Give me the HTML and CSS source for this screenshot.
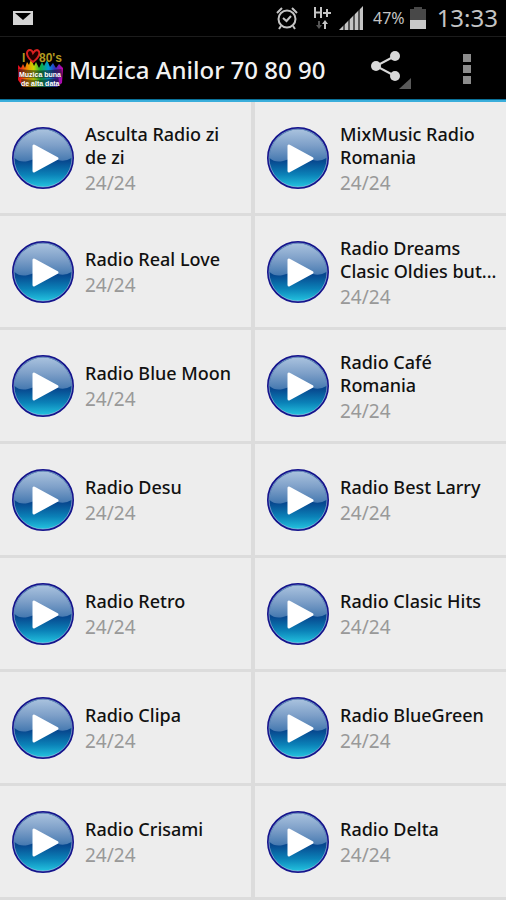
FILE: index.html
```html
<!DOCTYPE html>
<html lang="ro">
<head>
<meta charset="utf-8">
<meta name="viewport" content="width=device-width, initial-scale=1">
<title>Muzica Anilor 70 80 90</title>
<link rel="stylesheet" href="styles.css">
</head>
<body>
<svg class="defs" width="0" height="0" aria-hidden="true">
  <defs>
    <linearGradient id="lower" x1="0" y1="0" x2="0" y2="1">
      <stop offset="0" stop-color="#07458c"/>
      <stop offset=".55" stop-color="#07488f"/>
      <stop offset=".78" stop-color="#0b82b8"/>
      <stop offset="1" stop-color="#25c8e2"/>
    </linearGradient>
    <linearGradient id="gloss" x1="0" y1="0" x2="0" y2="1">
      <stop offset="0" stop-color="#a9c2de"/>
      <stop offset=".5" stop-color="#7d9fc8"/>
      <stop offset="1" stop-color="#4478b0"/>
    </linearGradient>
    <linearGradient id="rainbow">
      <stop offset="0" stop-color="#e00020"/>
      <stop offset=".2" stop-color="#f08a00"/>
      <stop offset=".35" stop-color="#c8d800"/>
      <stop offset=".5" stop-color="#10b040"/>
      <stop offset=".68" stop-color="#0098d8"/>
      <stop offset=".82" stop-color="#3030c0"/>
      <stop offset="1" stop-color="#d000a8"/>
    </linearGradient>
    <symbol id="play" viewBox="0 0 62 62">
      <circle cx="31" cy="31" r="30" fill="url(#lower)" stroke="#14148c" stroke-width="2"/>
      <path d="M2.5 31A28.5 28.5 0 0 1 59.5 31Q53 35 46 33Q31 28 16 34Q8 36 2.500 31Z" fill="url(#gloss)"/>
      <circle cx="31" cy="31" r="29" fill="none" stroke="#b9cfe6" stroke-opacity=".55" stroke-width="1"/>
      <path d="M22 19V44L45 31.500Z" fill="#fff" stroke="#fff" stroke-width="3" stroke-linejoin="round"/>
    </symbol>
  </defs>
</svg>
<header class="top">
  <div class="status">
    <svg class="mail" width="20" height="14" viewBox="0 0 20 14" aria-label="Mail"><path fill="#d4d4d4" d="M0 0H20V14H0Z"/><path fill="#000" d="M2 2H18L10 9Z"/></svg>
    <svg width="22" height="24" viewBox="0 0 22 24" fill="none" stroke="#c4c4c4" stroke-width="2" aria-label="Alarm"><circle cx="11" cy="13" r="8.500"/><path d="M7 12L10.500 15L15 10M1 7L6 2M16 2L21 7M5 20L3 23M17 20L19 23"/></svg>
    <svg class="network" width="18" height="24" viewBox="0 0 18 24" fill="none" aria-label="H+"><path d="M2 1V12M8 1V12M2 6.500H8M10 7H18M14 3V11" stroke="#c4c4c4" stroke-width="2"/><path d="M6 15V20" stroke="#555" stroke-width="2"/><path d="M3 19H9L6 23Z" fill="#555"/><path d="M12 17V23" stroke="#c4c4c4" stroke-width="2"/><path d="M9 18H15L12 14Z" fill="#c4c4c4"/></svg>
    <svg class="signal" width="24" height="24" viewBox="0 0 24 24" fill="#c4c4c4" aria-label="Signal"><path d="M0 24L4 20V24ZM6 18L9 15V24H6ZM11 13L14 10V24H11ZM16 8L19 5V24H16ZM21 3L24 0V24H21Z"/><path d="M4 20L6 18V24H4ZM9 15L11 13V24H9ZM14 10L16 8V24H14ZM19 5L21 3V24H19Z" fill="#555"/></svg>
    <span class="percent">47%</span>
    <svg class="battery" width="16" height="22" viewBox="0 0 16 22" aria-label="Battery"><path fill="#484848" d="M4 0H12V2H16V13H0V2H4Z"/><path fill="#c8c8c8" d="M0 13H16V22H0Z"/></svg>
    <time class="clock">13:33</time>
  </div>
  <div class="bar">
    <svg class="logo" width="48" height="42" viewBox="0 0 48 42" aria-hidden="true">
      <path d="M1 17L4 20L6 16L8 20L10 14L12 17L14 11L17 18L19 14L22 20L25 14L27 18L30 12L33 19L36 15L39 20L42 16L46 20L45 35L40 39H6L1 32Z" fill="url(#rainbow)"/>
      <text x="5" y="14" class="logo-big">I</text>
      <path d="M16 14C8 8 9 2 13 2Q15 2 16 5Q18 2 20 2C24 3 23 9 16 14Z" fill="#200" stroke="#d82020" stroke-width="2"/>
      <text x="22" y="14" class="logo-big">80's</text>
      <path d="M1 25Q24 28 45 25M4 35Q24 37 42 34" stroke="#111" stroke-opacity=".5" stroke-width="8" fill="none"/>
      <text x="2" y="29" class="logo-small">Muzica buna</text>
      <text x="4" y="38" class="logo-small">de alta data</text>
    </svg>
    <h1>Muzica Anilor 70 80 90</h1>
    <button class="share" aria-label="Share"><svg width="42" height="42" viewBox="0 0 42 42"><path d="M25 8L6 18L25 28" fill="none" stroke="#d8d8d8" stroke-width="2"/><g fill="#d8d8d8"><circle cx="25" cy="8" r="5"/><circle cx="6" cy="18" r="5"/><circle cx="25" cy="28" r="5"/></g><path d="M41 30V41H29Z" fill="#5a5a5a"/></svg></button>
    <button class="more" aria-label="More options"><svg width="8" height="30" viewBox="0 0 8 30" fill="#8c8c8c"><path d="M0 0H8V8H0ZM0 11H8V19H0ZM0 22H8V30H0Z"/></svg></button>
  </div>
</header>
<main class="stations">
  <a class="station" href="#"><svg class="play"><use href="#play"/></svg><span class="info"><span class="name">Asculta Radio zi<br>de zi</span><span class="count">24/24</span></span></a>
  <a class="station" href="#"><svg class="play"><use href="#play"/></svg><span class="info"><span class="name">MixMusic Radio Romania</span><span class="count">24/24</span></span></a>
  <a class="station" href="#"><svg class="play"><use href="#play"/></svg><span class="info"><span class="name">Radio Real Love</span><span class="count">24/24</span></span></a>
  <a class="station" href="#"><svg class="play"><use href="#play"/></svg><span class="info"><span class="name">Radio Dreams<br>Clasic Oldies but...</span><span class="count">24/24</span></span></a>
  <a class="station" href="#"><svg class="play"><use href="#play"/></svg><span class="info"><span class="name">Radio Blue Moon</span><span class="count">24/24</span></span></a>
  <a class="station" href="#"><svg class="play"><use href="#play"/></svg><span class="info"><span class="name">Radio Café Romania</span><span class="count">24/24</span></span></a>
  <a class="station" href="#"><svg class="play"><use href="#play"/></svg><span class="info"><span class="name">Radio Desu</span><span class="count">24/24</span></span></a>
  <a class="station" href="#"><svg class="play"><use href="#play"/></svg><span class="info"><span class="name">Radio Best Larry</span><span class="count">24/24</span></span></a>
  <a class="station" href="#"><svg class="play"><use href="#play"/></svg><span class="info"><span class="name">Radio Retro</span><span class="count">24/24</span></span></a>
  <a class="station" href="#"><svg class="play"><use href="#play"/></svg><span class="info"><span class="name">Radio Clasic Hits</span><span class="count">24/24</span></span></a>
  <a class="station" href="#"><svg class="play"><use href="#play"/></svg><span class="info"><span class="name">Radio Clipa</span><span class="count">24/24</span></span></a>
  <a class="station" href="#"><svg class="play"><use href="#play"/></svg><span class="info"><span class="name">Radio BlueGreen</span><span class="count">24/24</span></span></a>
  <a class="station" href="#"><svg class="play"><use href="#play"/></svg><span class="info"><span class="name">Radio Crisami</span><span class="count">24/24</span></span></a>
  <a class="station" href="#"><svg class="play"><use href="#play"/></svg><span class="info"><span class="name">Radio Delta</span><span class="count">24/24</span></span></a>
</main>
</body>
</html>
```
FILE: styles.css
```css
* {
  box-sizing: border-box;
}

body {
  margin: 0;
  background: #dcdcdc;
  font-family: "Noto Sans", "Open Sans", sans-serif;
}

.defs {
  display: block;
}

.top {
  background: #000;
  border-bottom: 2px solid #3aaedb;
}

.status {
  display: flex;
  align-items: center;
  height: 37px;
  padding: 0 8px 0 13px;
  color: #c4c4c4;
  border-bottom: 1px solid #1c1c1c;
}

.mail {
  margin-right: auto;
}

.network {
  margin-left: 15px;
}

.signal {
  margin: 0 10px 0 8px;
}

.percent {
  font-size: 16px;
}

.battery {
  margin: 0 11px 0 5px;
}

.clock {
  font-size: 24px;
  line-height: 36px;
}

.bar {
  display: flex;
  align-items: center;
  height: 63px;
  padding: 2px 35px 0 17px;
  border-bottom: 1px solid #0a7098;
}

.logo {
  flex: none;
}

.logo-big {
  font: bold 12px "Liberation Sans", sans-serif;
  fill: #b39a20;
}

.logo-small {
  font: bold 7px "Liberation Sans", sans-serif;
  fill: #fff;
}

h1 {
  flex: 1;
  margin: 0 0 0 4px;
  color: #f2f2f2;
  font-size: 24px;
  font-weight: 500;
  white-space: nowrap;
}

button {
  display: flex;
  padding: 0;
  border: 0;
  background: none;
}

.share {
  margin-right: 51px;
}

.stations {
  display: grid;
  grid-template-columns: 1fr 1fr;
  gap: 3px 4px;
  padding-bottom: 3px;
}

.station {
  display: flex;
  align-items: center;
  gap: 11px;
  min-height: 111px;
  padding: 0 4px 0 12px;
  background: #ededed;
  color: #111;
  text-decoration: none;
}

.play {
  flex: none;
  width: 62px;
  height: 62px;
}

.info {
  display: flex;
  flex-direction: column;
  min-width: 0;
  padding-top: 4px;
}

.name {
  font-size: 18px;
  font-weight: 500;
  line-height: 23px;
}

.count {
  color: #999;
  font-size: 19px;
  line-height: 28px;
}
```
